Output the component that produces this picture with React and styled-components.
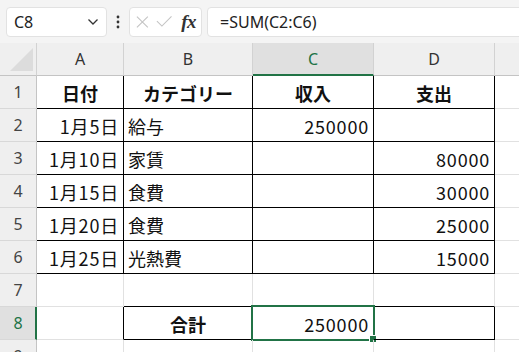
import React from "react";
import styled, { createGlobalStyle } from "styled-components";

const GlobalStyle = createGlobalStyle`
  html, body {
    margin: 0;
    padding: 0;
    background: #ffffff;
    overflow: hidden;
  }
  body {
    font-family: "Noto Sans", "Noto Sans CJK JP", sans-serif;
  }
`;

const GRID = "#e1e1e1";
const LINE = "#000000";
const GREEN = "#217346";

const Window = styled.div`
  width: 519px;
  height: 352px;
  overflow: hidden;
  display: flex;
  flex-direction: column;
`;

/* formula bar */
const Toolbar = styled.div`
  height: 43px;
  flex: none;
  display: flex;
  align-items: center;
  padding-left: 6px;
  background: #f4f4f4;
  box-sizing: border-box;
`;

const Box = styled.div`
  height: 30px;
  box-sizing: border-box;
  background: #ffffff;
  border: 1px solid #e2e2e2;
  border-radius: 4px;
  display: flex;
  align-items: center;
`;

const NameBox = styled(Box)`
  width: 101px;
  padding: 0 7px 0 7px;
  justify-content: space-between;
  font-size: 16px;
  color: #222;
`;

const Dots = styled.div`
  width: 22px;
  display: flex;
  justify-content: center;
`;

const IconBox = styled(Box)`
  width: 73px;
  padding: 0 5px 0 6px;
  gap: 7px;
`;

const Fx = styled.span`
  font-family: "Liberation Serif", serif;
  font-style: italic;
  font-weight: 700;
  font-size: 19px;
  color: #333;
  margin-left: 2px;
  letter-spacing: -0.5px;
`;

const FormulaBox = styled(Box)`
  flex: 1;
  margin-left: 5px;
  margin-right: -8px;
  padding-left: 12px;
  font-size: 16px;
  color: #222;
  border-radius: 4px 0 0 4px;
`;

/* sheet */
const Sheet = styled.div`
  display: grid;
  grid-template-columns: 37px 87px 129px 121px 121px 121px;
  grid-template-rows: 33px repeat(9, 33px);
  flex: none;
`;

const Corner = styled.div`
  background: #efefef;
  border-right: 1px solid #d2d2d2;
  border-bottom: 1px solid #c4c4c4;
  position: relative;
`;

const Triangle = styled.svg`
  position: absolute;
  left: 10px;
  top: 5px;
`;

const ColHead = styled.div`
  background: ${(p) => (p.$active ? "#e0e0e0" : "#efefef")};
  color: ${(p) => (p.$active ? GREEN : "#333")};
  border-right: 1px solid #d2d2d2;
  border-bottom: ${(p) => (p.$active ? `2px solid ${GREEN}` : "1px solid #c4c4c4")};
  display: flex;
  align-items: center;
  justify-content: center;
  font-size: 16px;
  padding-bottom: ${(p) => (p.$active ? "0" : "1px")};
`;

const RowHead = styled.div`
  background: ${(p) => (p.$active ? "#e0e0e0" : "#efefef")};
  color: ${(p) => (p.$active ? GREEN : "#444")};
  border-right: ${(p) => (p.$active ? `2px solid ${GREEN}` : "1px solid #c4c4c4")};
  border-bottom: 1px solid #d8d8d8;
  display: flex;
  align-items: center;
  justify-content: center;
  font-size: 16px;
  padding-left: ${(p) => (p.$active ? "1px" : "0")};
`;

const Cell = styled.div`
  position: relative;
  border-right: 1px solid ${(p) => p.$r || GRID};
  border-bottom: 1px solid ${(p) => p.$b || GRID};
  display: flex;
  align-items: center;
  justify-content: ${(p) =>
    p.$align === "center" ? "center" : p.$align === "right" ? "flex-end" : "flex-start"};
  padding: 0 4px 0 4px;
  font-family: "Noto Sans CJK JP", sans-serif;
  font-size: 18px;
  font-weight: ${(p) => (p.$bold ? 700 : 400)};
  letter-spacing: ${(p) => (p.$wide ? "0.8px" : "0")};
  color: #111;
  white-space: nowrap;
  padding-top: 1px;
`;

const Selection = styled.div`
  position: absolute;
  left: -2px;
  top: -2px;
  width: 124px;
  height: 36px;
  box-sizing: border-box;
  border: 2px solid ${GREEN};
  pointer-events: none;
`;

const Handle = styled.div`
  position: absolute;
  right: -3px;
  bottom: -3px;
  width: 6px;
  height: 6px;
  background: ${GREEN};
  border: 1px solid #fff;
  box-sizing: content-box;
  transform: translate(1px, 1px);
`;

const columns = ["A", "B", "C", "D", "E"];

const rows = [
  ["日付", "カテゴリー", "収入", "支出"],
  ["1月5日", "給与", "250000", ""],
  ["1月10日", "家賃", "", "80000"],
  ["1月15日", "食費", "", "30000"],
  ["1月20日", "食費", "", "25000"],
  ["1月25日", "光熱費", "", "15000"],
  ["", "", "", ""],
  ["", "合計", "250000", ""],
  ["", "", "", ""],
];

// which border lines are drawn black
const borderFor = (r, c) => {
  if (c > 3) return {};
  if (r >= 1 && r <= 6) return { $r: LINE, $b: LINE };
  if (r === 7 && c >= 1) return { $b: LINE };
  if (r === 8) return c === 0 ? { $r: LINE } : { $r: LINE, $b: LINE };
  return {};
};

const alignFor = (r, c, value) => {
  if (r === 1 || (r === 8 && c === 1)) return "center";
  if (c === 0 || /^\d+$/.test(value)) return "right";
  return "left";
};

// numbers and dates get a bit of tracking
const isWide = (r, c, value) => /\d/.test(value);

const ChevronIcon = () => (
  <svg width="12" height="8" viewBox="0 0 12 8">
    <path d="M1.5 1.5 L6 6 L10.5 1.5" fill="none" stroke="#333" strokeWidth="1.3" />
  </svg>
);

const MoreIcon = () => (
  <svg width="4" height="14" viewBox="0 0 4 14">
    <circle cx="2" cy="2" r="1.4" fill="#333" />
    <circle cx="2" cy="7" r="1.4" fill="#333" />
    <circle cx="2" cy="12" r="1.4" fill="#333" />
  </svg>
);

const CancelIcon = () => (
  <svg width="14" height="14" viewBox="0 0 14 14">
    <path d="M1 1 L13 13 M13 1 L1 13" stroke="#c4c4c4" strokeWidth="1.2" fill="none" />
  </svg>
);

const EnterIcon = () => (
  <svg width="18" height="13" viewBox="0 0 18 13">
    <path d="M1 6 L6.5 11.5 L17 1" stroke="#c4c4c4" strokeWidth="1.2" fill="none" />
  </svg>
);

export default function App() {
  const activeCol = 2;
  const activeRow = 8;

  return (
    <Window>
      <GlobalStyle />
      <Toolbar>
        <NameBox>
          <span>C8</span>
          <ChevronIcon />
        </NameBox>
        <Dots>
          <MoreIcon />
        </Dots>
        <IconBox>
          <CancelIcon />
          <EnterIcon />
          <Fx>fx</Fx>
        </IconBox>
        <FormulaBox>=SUM(C2:C6)</FormulaBox>
      </Toolbar>

      <Sheet>
        <Corner>
          <Triangle width="24" height="24" viewBox="0 0 24 24">
            <polygon points="23,0 23,23 0,23" fill="#dcdcdc" />
          </Triangle>
        </Corner>
        {columns.map((name, i) => (
          <ColHead key={name} $active={i === activeCol}>
            {name}
          </ColHead>
        ))}

        {rows.map((row, ri) => {
          const r = ri + 1;
          return (
            <React.Fragment key={r}>
              <RowHead $active={r === activeRow}>{r}</RowHead>
              {row.map((value, c) => (
                <Cell
                  key={c}
                  {...borderFor(r, c)}
                  $align={alignFor(r, c, value)}
                  $bold={r === 1 || (r === 8 && c === 1)}
                  $wide={isWide(r, c, value)}
                >
                  {value}
                  {r === activeRow && c === activeCol && (
                    <Selection>
                      <Handle />
                    </Selection>
                  )}
                </Cell>
              ))}
              <Cell />
            </React.Fragment>
          );
        })}
      </Sheet>
    </Window>
  );
}
